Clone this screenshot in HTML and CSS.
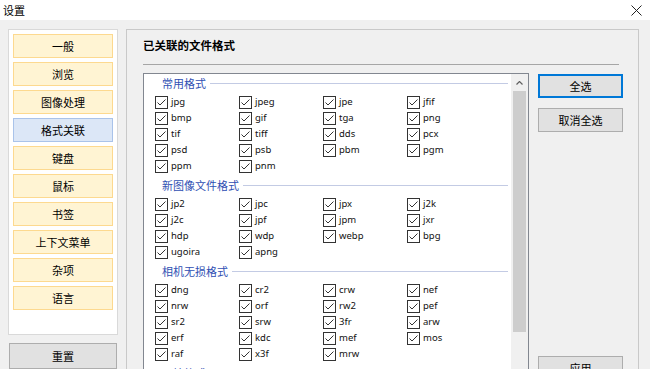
FILE: index.html
```html
<!DOCTYPE html>
<html lang="zh-CN">

<head>
    <meta charset="UTF-8">
    <meta name="viewport" content="width=device-width, initial-scale=1.0">
    <title>设置</title>
    <link rel="stylesheet" href="styles.css">
</head>

<body>
    <div class="titlebar">
        <span class="title">设置</span>
        <svg class="close" width="11" height="11" viewBox="0 0 11 11">
            <path d="M0.5 0.5 L10.5 10.5 M10.5 0.5 L0.5 10.5" stroke="#222" stroke-width="1" fill="none" />
        </svg>
    </div>

    <div class="main">
        <div class="sidebar">
            <div class="nav">
                <div class="nav-btn">一般</div>
                <div class="nav-btn">浏览</div>
                <div class="nav-btn">图像处理</div>
                <div class="nav-btn active">格式关联</div>
                <div class="nav-btn">键盘</div>
                <div class="nav-btn">鼠标</div>
                <div class="nav-btn">书签</div>
                <div class="nav-btn">上下文菜单</div>
                <div class="nav-btn">杂项</div>
                <div class="nav-btn">语言</div>
            </div>
            <div class="btn reset">重置</div>
        </div>

        <div class="panel">
            <div class="panel-title">已关联的文件格式</div>
            <div class="rule"></div>
            <div class="content">
                <div class="list">
                    <div class="list-body">
                        <div class="group-head">常用格式</div>
                        <div class="group-items">
                            <div class="item"><span class="box"></span>jpg</div>
                            <div class="item"><span class="box"></span>jpeg</div>
                            <div class="item"><span class="box"></span>jpe</div>
                            <div class="item"><span class="box"></span>jfif</div>
                            <div class="item"><span class="box"></span>bmp</div>
                            <div class="item"><span class="box"></span>gif</div>
                            <div class="item"><span class="box"></span>tga</div>
                            <div class="item"><span class="box"></span>png</div>
                            <div class="item"><span class="box"></span>tif</div>
                            <div class="item"><span class="box"></span>tiff</div>
                            <div class="item"><span class="box"></span>dds</div>
                            <div class="item"><span class="box"></span>pcx</div>
                            <div class="item"><span class="box"></span>psd</div>
                            <div class="item"><span class="box"></span>psb</div>
                            <div class="item"><span class="box"></span>pbm</div>
                            <div class="item"><span class="box"></span>pgm</div>
                            <div class="item"><span class="box"></span>ppm</div>
                            <div class="item"><span class="box"></span>pnm</div>
                        </div>

                        <div class="group-head">新图像文件格式</div>
                        <div class="group-items">
                            <div class="item"><span class="box"></span>jp2</div>
                            <div class="item"><span class="box"></span>jpc</div>
                            <div class="item"><span class="box"></span>jpx</div>
                            <div class="item"><span class="box"></span>j2k</div>
                            <div class="item"><span class="box"></span>j2c</div>
                            <div class="item"><span class="box"></span>jpf</div>
                            <div class="item"><span class="box"></span>jpm</div>
                            <div class="item"><span class="box"></span>jxr</div>
                            <div class="item"><span class="box"></span>hdp</div>
                            <div class="item"><span class="box"></span>wdp</div>
                            <div class="item"><span class="box"></span>webp</div>
                            <div class="item"><span class="box"></span>bpg</div>
                            <div class="item"><span class="box"></span>ugoira</div>
                            <div class="item"><span class="box"></span>apng</div>
                        </div>

                        <div class="group-head">相机无损格式</div>
                        <div class="group-items">
                            <div class="item"><span class="box"></span>dng</div>
                            <div class="item"><span class="box"></span>cr2</div>
                            <div class="item"><span class="box"></span>crw</div>
                            <div class="item"><span class="box"></span>nef</div>
                            <div class="item"><span class="box"></span>nrw</div>
                            <div class="item"><span class="box"></span>orf</div>
                            <div class="item"><span class="box"></span>rw2</div>
                            <div class="item"><span class="box"></span>pef</div>
                            <div class="item"><span class="box"></span>sr2</div>
                            <div class="item"><span class="box"></span>srw</div>
                            <div class="item"><span class="box"></span>3fr</div>
                            <div class="item"><span class="box"></span>arw</div>
                            <div class="item"><span class="box"></span>erf</div>
                            <div class="item"><span class="box"></span>kdc</div>
                            <div class="item"><span class="box"></span>mef</div>
                            <div class="item"><span class="box"></span>mos</div>
                            <div class="item"><span class="box"></span>raf</div>
                            <div class="item"><span class="box"></span>x3f</div>
                            <div class="item"><span class="box"></span>mrw</div>
                        </div>

                        <div class="group-head">原始格式</div>
                    </div>
                    <div class="scrollbar">
                        <div class="scroll-arrow">
                            <svg width="7" height="4" viewBox="0 0 7 4">
                                <path d="M0.5 3.5 L3.5 0.5 L6.5 3.5" stroke="#606060" stroke-width="1.2" fill="none" />
                            </svg>
                        </div>
                        <div class="scroll-thumb"></div>
                    </div>
                </div>

                <div class="actions">
                    <div class="btn default">全选</div>
                    <div class="btn second">取消全选</div>
                    <div class="btn apply">应用</div>
                </div>
            </div>
        </div>
    </div>
</body>

</html>
```

FILE: styles.css
```css
body {
    font-family: "Noto Sans CJK SC", sans-serif;
    font-size: 11px;
    color: #000;
    background-color: #f0f0f0;
    margin: 0;
    padding: 0;
    width: 650px;
    height: 369px;
    overflow: hidden;
}

.titlebar {
    height: 20px;
    background-color: #fff;
    display: flex;
    align-items: center;
    justify-content: space-between;
    padding: 0 8px 0 3px;
}

.title {
    line-height: 16px;
}

.close {
    display: block;
    margin-top: 1px;
}

.main {
    display: flex;
    gap: 8px;
    padding: 9px 0 0 8px;
}

.sidebar {
    width: 110px;
    display: flex;
    flex-direction: column;
    gap: 8px;
}

.nav {
    box-sizing: border-box;
    height: 306px;
    background-color: #fff;
    border: 1px solid #d9d9d9;
    padding: 4px;
    display: flex;
    flex-direction: column;
    gap: 4px;
}

.nav-btn {
    box-sizing: border-box;
    height: 24px;
    line-height: 22px;
    text-align: center;
    background-color: #fff4d3;
    border: 1px solid #fdd98f;
}

.nav-btn.active {
    background-color: #dce7f7;
    border-color: #a9c3ea;
}

.btn {
    box-sizing: border-box;
    height: 24px;
    line-height: 22px;
    text-align: center;
    background-color: #e1e1e1;
    border: 1px solid #adadad;
}

.reset {
    height: 26px;
    line-height: 24px;
    margin: 0 1px;
}

.panel {
    box-sizing: border-box;
    width: 513px;
    height: 400px;
    border: 1px solid #c9c9c9;
    padding: 0 15px 0 16px;
}

.panel-title {
    font-weight: bold;
    font-size: 11.5px;
    line-height: 16px;
    padding-top: 7px;
}

.rule {
    border-top: 1px solid #a6a6a6;
    margin: 11px 4px 0 0;
}

.content {
    display: flex;
    gap: 9px;
    margin-top: 8px;
}

.list {
    box-sizing: border-box;
    width: 386px;
    height: 307px;
    background-color: #fff;
    border: 1px solid #828790;
    display: flex;
    overflow: hidden;
}

.list-body {
    flex: 1;
    padding: 1px 3px 0 0;
}

.group-head {
    display: flex;
    align-items: center;
    height: 16px;
    padding-left: 18px;
    color: #2f4fb3;
}

.group-head::after {
    content: "";
    flex: 1;
    border-top: 1px solid #c3cbe4;
    margin-left: 4px;
}

.group-items {
    display: grid;
    grid-template-columns: repeat(4, 84px);
    grid-auto-rows: 16px;
    padding-left: 11px;
    margin: 3px 0;
}

.item {
    display: flex;
    align-items: center;
    gap: 3px;
    line-height: 16px;
    font-family: "Noto Sans", "Noto Sans CJK SC", sans-serif;
    font-size: 9.5px;
    color: #111;
}

.box {
    width: 13px;
    height: 13px;
    flex-shrink: 0;
    background: url("data:image/svg+xml,%3Csvg xmlns='http://www.w3.org/2000/svg' width='13' height='13'%3E%3Crect x='0.5' y='0.5' width='12' height='12' fill='white' stroke='%23333'/%3E%3Cpath d='M2.5 6.5 L5 9 L10.5 3.5' fill='none' stroke='%23333'/%3E%3C/svg%3E") no-repeat;
}

.scrollbar {
    width: 17px;
    background-color: #f0f0f0;
    display: flex;
    flex-direction: column;
    align-items: center;
}

.scroll-arrow {
    height: 17px;
    display: flex;
    align-items: center;
    justify-content: center;
}

.scroll-arrow svg {
    display: block;
}

.scroll-thumb {
    width: 13px;
    height: 241px;
    background-color: #cdcdcd;
}

.actions {
    width: 85px;
    display: flex;
    flex-direction: column;
}

.default {
    margin-top: 1px;
    border-color: #0078d7;
    box-shadow: inset 0 0 0 1px #0078d7;
}

.second {
    margin-top: 10px;
}

.apply {
    margin-top: auto;
}
```
